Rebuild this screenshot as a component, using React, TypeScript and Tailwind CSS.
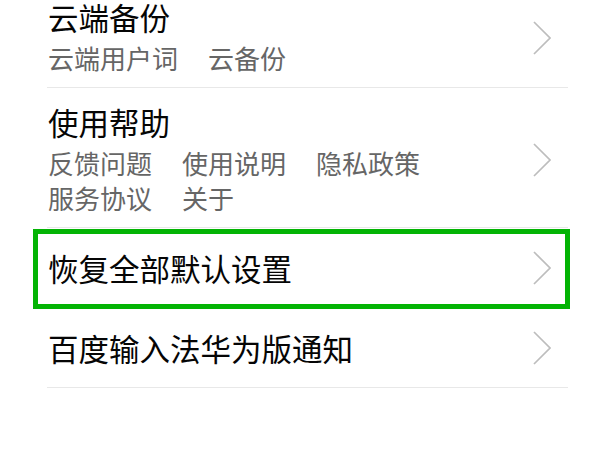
import React from "react";

const FONT = { fontFamily: '"Noto Sans CJK SC", "Noto Sans", sans-serif' };

const Chevron = () => (
  <svg width="18" height="34" viewBox="0 0 18 34" fill="none" className="shrink-0">
    <path d="M1 1 L17 17 L1 33" stroke="#bdbdbd" strokeWidth="1.7" strokeLinejoin="miter" />
  </svg>
);

type RowProps = {
  title: string;
  lines?: string[][];
  highlight?: boolean;
  first?: boolean;
};

const Row = ({ title, lines, highlight, first }: RowProps) => {
  if (!lines) {
    return (
      <div className="relative ml-[47px] mr-[32px] h-[80px] flex items-center justify-between border-b border-[#e8e8e8] pl-px pr-[17px]">
        <div className="text-[30.5px] leading-[36px] text-[#050505]">{title}</div>
        <Chevron />
        {highlight && (
          <div className="absolute left-[-14px] right-[-2px] top-px bottom-[-2px] border-[5px] border-[#03b404] pointer-events-none" />
        )}
      </div>
    );
  }

  return (
    <div
      className={
        first
          ? "ml-[47px] mr-[32px] flex items-center justify-between border-b border-[#e8e8e8] pl-px pr-[17px] pt-0 pb-[12px]"
          : "ml-[47px] mr-[32px] flex items-center justify-between border-b border-[#e8e8e8] pl-px pr-[17px] pt-4 pb-[12px]"
      }
    >
      <div className="flex flex-col">
        <div
          className={
            first
              ? "text-[30.5px] leading-[34px] text-[#050505]"
              : "text-[30.5px] leading-[36px] text-[#050505]"
          }
        >
          {title}
        </div>
        <div className={first ? "mt-[6px] flex flex-col" : "mt-[5px] flex flex-col"}>
          {lines.map((line, i) => (
            <div key={i} className="flex gap-[30px] text-[26px] leading-[35px] text-[#666666]">
              {line.map((item) => (
                <span key={item}>{item}</span>
              ))}
            </div>
          ))}
        </div>
      </div>
      <Chevron />
    </div>
  );
};

export default function App() {
  return (
    <div className="w-[600px] h-[450px] overflow-hidden bg-white" style={FONT}>
      <Row title="云端备份" lines={[["云端用户词", "云备份"]]} first />
      <Row
        title="使用帮助"
        lines={[
          ["反馈问题", "使用说明", "隐私政策"],
          ["服务协议", "关于"],
        ]}
      />
      <Row title="恢复全部默认设置" highlight />
      <Row title="百度输入法华为版通知" />
    </div>
  );
}
